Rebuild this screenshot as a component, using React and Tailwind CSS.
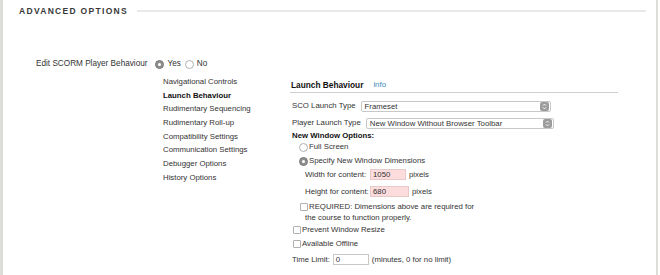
import React from 'react';

const menu = [
  'Navigational Controls',
  'Launch Behaviour',
  'Rudimentary Sequencing',
  'Rudimentary Roll-up',
  'Compatibility Settings',
  'Communication Settings',
  'Debugger Options',
  'History Options',
];

const Radio = ({ on }) =>
  on ? (
    <span className="w-[9px] h-[9px] rounded-full bg-[#8e8e8e] border border-[#7a7a7a] flex items-center justify-center shrink-0">
      <span className="w-[3px] h-[3px] rounded-full bg-white" />
    </span>
  ) : (
    <span className="block w-[9px] h-[9px] rounded-full bg-white border border-[#b0b0b0] shrink-0" />
  );

const Check = () => (
  <span className="block w-[8px] h-[8px] rounded-[1px] bg-white border border-[#b0b0b0] shrink-0" />
);

const Select = ({ value, className }) => (
  <div className={`h-[11px] flex items-center border border-[#c8c8c8] rounded-[2px] bg-white pl-[3px] pr-[1px] ${className}`}>
    <span className="flex-1 leading-[9px]">{value}</span>
    <span className="w-[9px] h-[9px] rounded-[2px] bg-[#9c9c9c] flex items-center justify-center">
      <svg width="5" height="7" viewBox="0 0 5 7" fill="none" stroke="white" strokeWidth="0.9">
        <path d="M1 2.6 L2.5 1.1 L4 2.6 M1 4.4 L2.5 5.9 L4 4.4" />
      </svg>
    </span>
  </div>
);

const Field = ({ value, pink, className }) => (
  <div className={`h-[11px] border px-[2px] leading-[9px] ${pink ? 'bg-[#fcdcdc] border-[#e6c9c9]' : 'bg-white border-[#c8c8c8]'} ${className}`}>
    {value}
  </div>
);

export default function App() {
  return (
    <div className="w-[660px] h-[275px] bg-white flex" style={{ fontFamily: '"Liberation Sans", Arial, sans-serif' }}>
      <div className="w-[658px] h-full border-l-[3px] border-r-[2px] border-[#dcdcd8] text-[#333] text-[7.8px]">
        {/* header */}
        <div className="h-[22px] flex items-center pl-[16px] pr-[10px]">
          <span className="text-[8.5px] font-bold tracking-[1.3px] text-[#3a3a3a] leading-[10px]">ADVANCED OPTIONS</span>
          <div className="flex-1 h-[2px] bg-[#e8e8e8] ml-[9px]" />
        </div>

        {/* edit row */}
        <div className="mt-[36px] pl-[33px] h-[12px] flex items-center text-[8.2px] leading-[12px]">
          <span>Edit SCORM Player Behaviour</span>
          <span className="ml-[8px]"><Radio on /></span>
          <span className="ml-[3px]">Yes</span>
          <span className="ml-[4px]"><Radio /></span>
          <span className="ml-[3px]">No</span>
        </div>

        <div className="mt-[5px] flex">
          {/* side menu */}
          <div className="ml-[160px] w-[127px] leading-[13.65px]">
            {menu.map((m) => (
              <div key={m} className={m === 'Launch Behaviour' ? 'font-bold text-[#111]' : ''}>{m}</div>
            ))}
          </div>

          {/* panel */}
          <div className="w-[328px] pt-[4px]">
            <div className="flex items-center border-b border-[#cfcfcf] pb-[1px] leading-[12px]">
              <span className="ml-[1px] font-bold text-[8.3px] text-[#111]">Launch Behaviour</span>
              <span className="ml-[10px] text-[#3b8ab8]">info</span>
            </div>

            <div className="mt-[7px] pl-[2px] h-[12px] flex items-center">
              <span>SCO Launch Type</span>
              <Select value="Frameset" className="ml-[5px] w-[190px]" />
            </div>
            <div className="mt-[5px] pl-[2px] h-[12px] flex items-center">
              <span>Player Launch Type</span>
              <Select value="New Window Without Browser Toolbar" className="ml-[5px] w-[188px]" />
            </div>

            <div className="mt-[2px] pl-[2px] font-bold text-[#111] leading-[10px]">New Window Options:</div>
            <div className="mt-[1px] pl-[9px] h-[10px] flex items-center">
              <Radio />
              <span className="ml-[1px]">Full Screen</span>
            </div>
            <div className="mt-[4px] pl-[9px] h-[10px] flex items-center">
              <Radio on />
              <span className="ml-[1px]">Specify New Window Dimensions</span>
            </div>
            <div className="mt-[3px] pl-[15px] h-[11px] flex items-center">
              <span className="w-[65px]">Width for content:</span>
              <Field value="1050" pink className="w-[36px]" />
              <span className="ml-[3px]">pixels</span>
            </div>
            <div className="mt-[6px] pl-[15px] h-[11px] flex items-center">
              <span className="w-[65px]">Height for content:</span>
              <Field value="680" pink className="w-[39px]" />
              <span className="ml-[3px]">pixels</span>
            </div>
            <div className="mt-[5px] pl-[10px] h-[10px] flex items-center">
              <Check />
              <span className="ml-[1px]">REQUIRED: Dimensions above are required for</span>
            </div>
            <div className="pl-[15px] leading-[11px]">the course to function properly.</div>
            <div className="mt-[2px] pl-[3px] h-[10px] flex items-center">
              <Check />
              <span className="ml-[1px]">Prevent Window Resize</span>
            </div>
            <div className="mt-[4px] pl-[3px] h-[10px] flex items-center">
              <Check />
              <span className="ml-[1px]">Available Offline</span>
            </div>
            <div className="mt-[5px] pl-[2px] h-[11px] flex items-center">
              <span>Time Limit:</span>
              <Field value="0" className="ml-[3px] w-[36px]" />
              <span className="ml-[3px]">(minutes, 0 for no limit)</span>
            </div>
          </div>
        </div>
      </div>
    </div>
  );
}
